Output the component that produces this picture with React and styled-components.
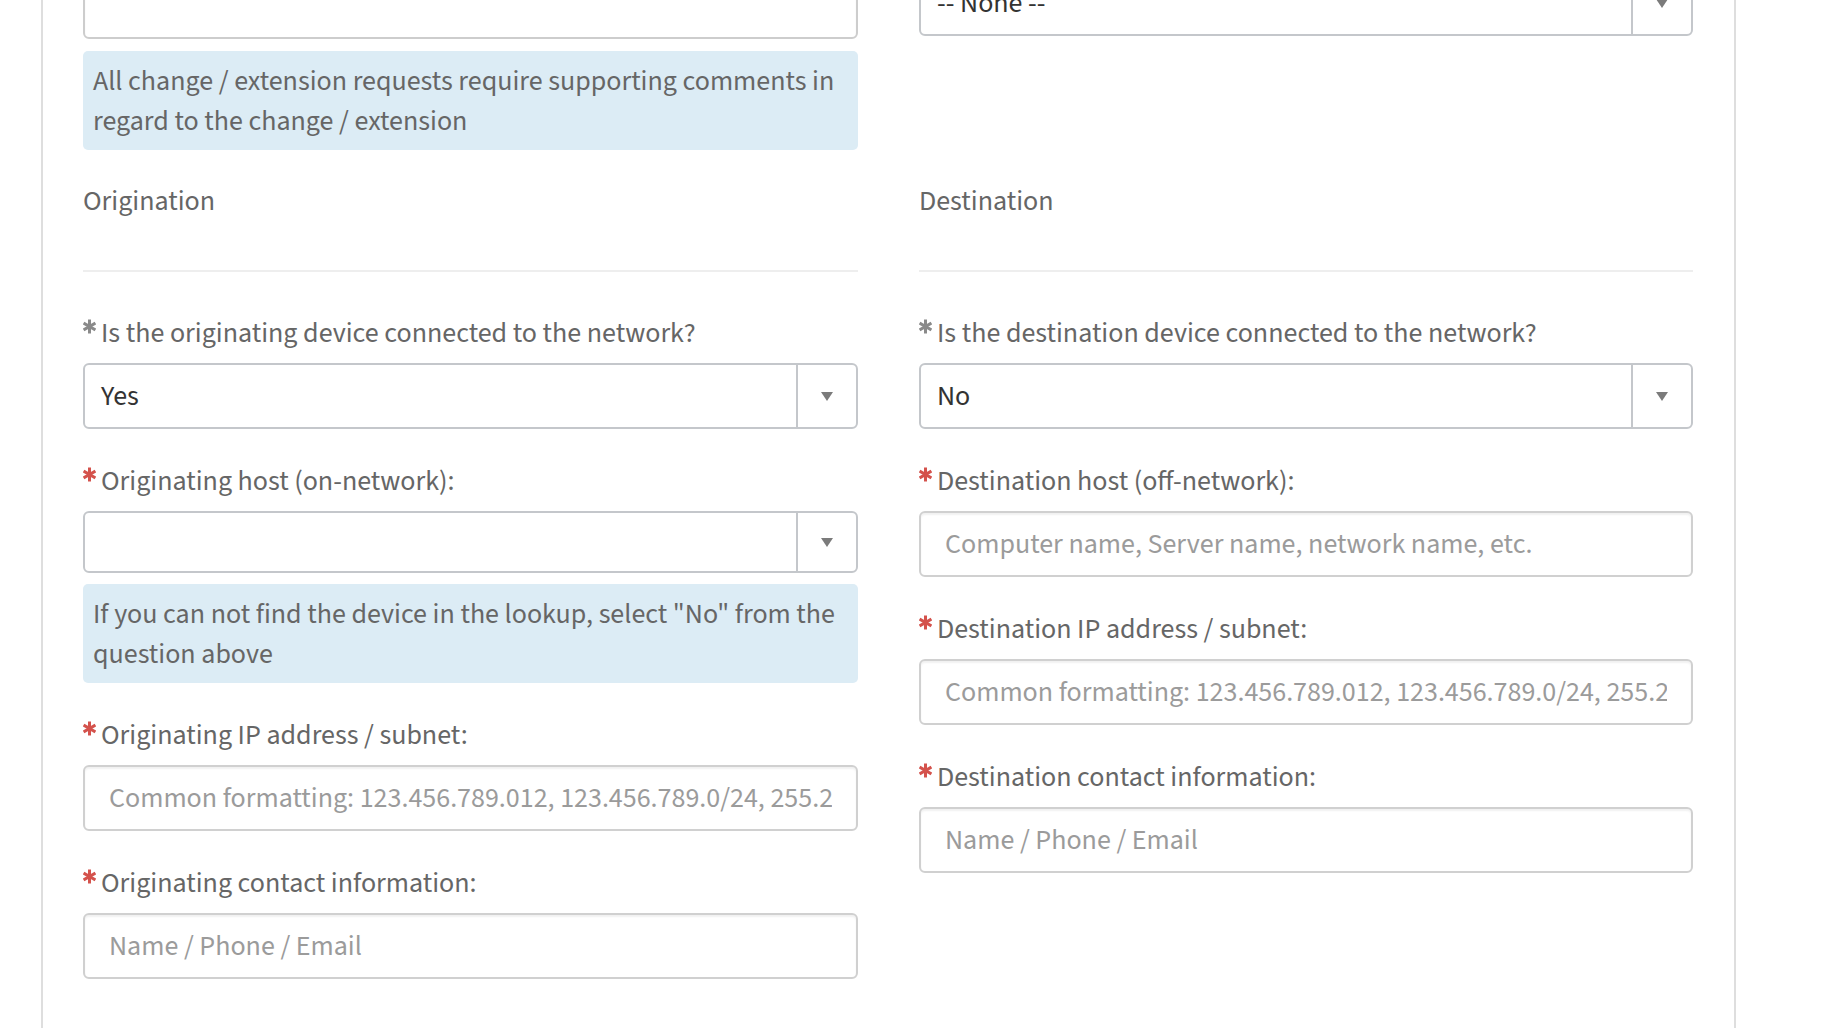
import React from 'react';
import styled, { createGlobalStyle } from 'styled-components';

const GlobalStyle = createGlobalStyle`
  html, body {
    margin: 0;
    background: #fff;
    overflow: hidden;
  }
  body {
    font-family: "Source Sans 3", "Source Sans Pro", Lato, "Liberation Sans", sans-serif;
    font-size: 28px;
    line-height: 40px;
    color: #666;
  }
`;

const Panel = styled.div`
  box-sizing: border-box;
  width: 1695px;
  min-height: 1100px;
  margin-left: 41px;
  padding: 0 41px 0 40px;
  border-left: 2px solid #dedede;
  border-right: 2px solid #dedede;
`;

const Row = styled.div`
  display: grid;
  grid-template-columns: 775px 774px;
  column-gap: 61px;
  align-items: start;
  margin-top: ${(p) => p.$top}px;
`;

const Column = styled.div`
  display: flex;
  flex-direction: column;
  margin-top: ${(p) => p.$top || 0}px;
`;

const TextArea = styled.div`
  box-sizing: border-box;
  height: 100px;
  border: 2px solid #cdcdcd;
  border-radius: 6px;
  background: #fff;
  box-shadow: inset 0 2px 2px rgba(0, 0, 0, 0.05);
`;

const InfoBox = styled.div`
  box-sizing: border-box;
  margin-top: ${(p) => p.$top || 12}px;
  padding: 10px 10px 9px;
  border-radius: 5px;
  background: #dcecf5;
  color: #666;
`;

const SectionTitle = styled.div`
  padding-top: 1px;
  padding-bottom: 49px;
  border-bottom: 2px solid #eeeeee;
  color: #666;
`;

const FieldGroup = styled.div`
  display: flex;
  flex-direction: column;
  margin-bottom: 31px;
`;

const Label = styled.label`
  display: flex;
  align-items: flex-start;
  padding-top: 1px;
  margin-bottom: 10px;
  color: #666;
  white-space: nowrap;
`;

const Asterisk = styled.svg`
  flex: none;
  width: 13px;
  height: 15px;
  margin-top: 6px;
  margin-right: 5px;
  color: ${(p) => (p.$filled ? '#8a8a8a' : '#d4524c')};
`;

const SelectBox = styled.div`
  box-sizing: border-box;
  display: flex;
  height: ${(p) => p.$height || 66}px;
  border: 2px solid #c4c7cb;
  border-radius: 6px;
  background: #fff;
`;

const SelectValue = styled.div`
  flex: 1;
  display: flex;
  align-items: center;
  padding-left: 16px;
  color: #333;
`;

const SelectToggle = styled.div`
  flex: none;
  width: 58px;
  display: flex;
  align-items: center;
  justify-content: center;
  border-left: 2px solid #c4c7cb;
`;

const Caret = styled.span`
  width: 0;
  height: 0;
  border-left: 6px solid transparent;
  border-right: 6px solid transparent;
  border-top: 9px solid #7b7b7b;
  margin-top: 1px;
`;

const TextInput = styled.input`
  box-sizing: border-box;
  width: 100%;
  height: 66px;
  margin: 0;
  padding: 0 24px;
  border: 2px solid #d0d0d0;
  border-radius: 6px;
  background: #fff;
  box-shadow: inset 0 2px 2px rgba(0, 0, 0, 0.06);
  font: inherit;
  color: #333;
  outline: none;

  &::placeholder {
    color: #9b9b9b;
    opacity: 1;
  }
`;

function Star({ filled }) {
  return (
    <Asterisk $filled={filled} viewBox="0 0 13 15" aria-hidden="true">
      <g stroke="currentColor" strokeWidth="3" strokeLinecap="butt">
        <line x1="6.5" y1="0.5" x2="6.5" y2="14.5" />
        <line x1="0.6" y1="4" x2="12.4" y2="11" />
        <line x1="0.6" y1="11" x2="12.4" y2="4" />
      </g>
    </Asterisk>
  );
}

function Select({ value, height }) {
  return (
    <SelectBox $height={height}>
      <SelectValue>{value}</SelectValue>
      <SelectToggle>
        <Caret />
      </SelectToggle>
    </SelectBox>
  );
}

function Field({ label, filled, children }) {
  return (
    <FieldGroup>
      <Label>
        <Star filled={filled} />
        {label}
      </Label>
      {children}
    </FieldGroup>
  );
}

const IP_HINT = 'Common formatting: 123.456.789.012, 123.456.789.0/24, 255.255.255.0';

export default function App() {
  return (
    <>
      <GlobalStyle />
      <Panel>
        <Row $top={-61}>
          <Column>
            <TextArea />
            <InfoBox>
              All change / extension requests require supporting comments in regard to the change / extension
            </InfoBox>
          </Column>
          <Column $top={31}>
            <Select value="-- None --" />
          </Column>
        </Row>

        <Row $top={30}>
          <SectionTitle>Origination</SectionTitle>
          <SectionTitle>Destination</SectionTitle>
        </Row>

        <Row $top={40}>
          <Column>
            <Field label="Is the originating device connected to the network?" filled>
              <Select value="Yes" />
            </Field>
            <Field label="Originating host (on-network):">
              <Select value="" height={62} />
              <InfoBox $top={11}>
                If you can not find the device in the lookup, select "No" from the question above
              </InfoBox>
            </Field>
            <Field label="Originating IP address / subnet:">
              <TextInput placeholder={IP_HINT} readOnly />
            </Field>
            <Field label="Originating contact information:">
              <TextInput placeholder="Name / Phone / Email" readOnly />
            </Field>
          </Column>
          <Column>
            <Field label="Is the destination device connected to the network?" filled>
              <Select value="No" />
            </Field>
            <Field label="Destination host (off-network):">
              <TextInput placeholder="Computer name, Server name, network name, etc." readOnly />
            </Field>
            <Field label="Destination IP address / subnet:">
              <TextInput placeholder={IP_HINT} readOnly />
            </Field>
            <Field label="Destination contact information:">
              <TextInput placeholder="Name / Phone / Email" readOnly />
            </Field>
          </Column>
        </Row>
      </Panel>
    </>
  );
}
